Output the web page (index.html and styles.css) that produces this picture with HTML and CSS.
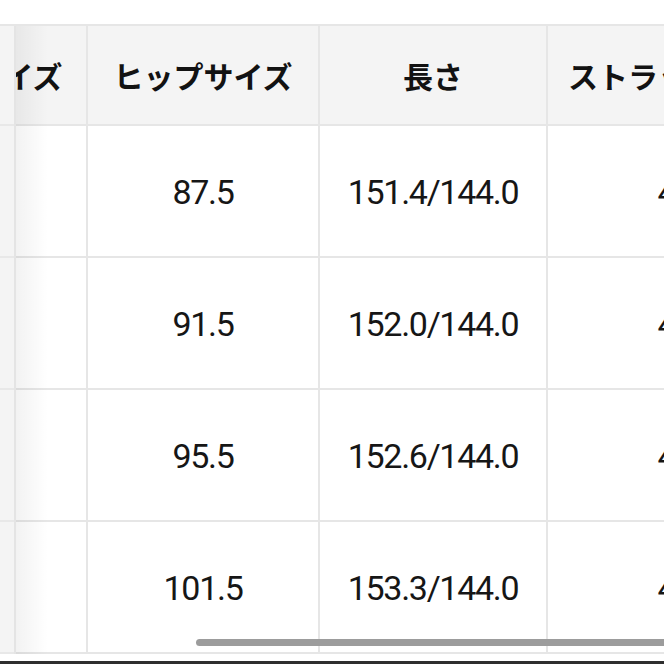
FILE: index.html
```html
<!DOCTYPE html>
<html lang="ja">
<head>
<meta charset="utf-8">
<title>サイズ表</title>
<link rel="stylesheet" href="styles.css">
</head>
<body>
<div class="screen">
  <div class="table">
    <div class="fixed-col">
      <div class="fcell head"></div>
      <div class="fcell"></div>
      <div class="fcell"></div>
      <div class="fcell"></div>
      <div class="fcell"></div>
    </div>
    <div class="scroller">
      <div class="grid">
        <div class="row head">
          <div class="cell">サイズ</div>
          <div class="cell">ヒップサイズ</div>
          <div class="cell">長さ</div>
          <div class="cell">ストラップの長さ</div>
        </div>
        <div class="row">
          <div class="cell"></div>
          <div class="cell">87.5</div>
          <div class="cell">151.4/144.0</div>
          <div class="cell">42.0</div>
        </div>
        <div class="row">
          <div class="cell"></div>
          <div class="cell">91.5</div>
          <div class="cell">152.0/144.0</div>
          <div class="cell">42.5</div>
        </div>
        <div class="row">
          <div class="cell"></div>
          <div class="cell">95.5</div>
          <div class="cell">152.6/144.0</div>
          <div class="cell">43.0</div>
        </div>
        <div class="row">
          <div class="cell"></div>
          <div class="cell">101.5</div>
          <div class="cell">153.3/144.0</div>
          <div class="cell">43.5</div>
        </div>
      </div>
      <div class="shadow"></div>
    </div>
    <div class="scrollbar"></div>
  </div>
  <div class="home-bar"></div>
</div>
</body>
</html>
```

FILE: styles.css
```css
* { box-sizing: border-box; }

html, body {
  margin: 0;
  padding: 0;
  background: #ffffff;
}

body {
  width: 664px;
  height: 664px;
  overflow: hidden;
  font-family: Roboto, "Noto Sans CJK JP", sans-serif;
  color: #161616;
}

.screen {
  padding-top: 24px;
  display: flex;
  flex-direction: column;
}

.table {
  position: relative;
  display: flex;
  height: 630px;
  border-top: 2px solid #e6e6e6;
}

.fixed-col {
  width: 16px;
  flex: none;
  background: #f4f4f4;
  border-right: 2px solid #e4e4e4;
}

.fcell {
  height: 132px;
  border-bottom: 2px solid #e8e8e8;
}

.fcell.head {
  height: 100px;
}

.scroller {
  position: relative;
  flex: 1;
  overflow: hidden;
}

.grid {
  margin-left: -66px;
  width: 880px;
}

.row {
  display: grid;
  grid-template-columns: 138px 232px 228px 282px;
  height: 132px;
  border-bottom: 2px solid #e6e6e6;
}

.row.head {
  height: 100px;
  background: #f4f4f4;
}

.cell {
  display: flex;
  align-items: center;
  justify-content: center;
  border-right: 2px solid #e6e6e6;
  white-space: nowrap;
  font-family: Roboto, sans-serif;
  font-size: 34px;
  letter-spacing: -1.3px;
  color: #161616;
  padding-top: 2px;
}

.row.head .cell {
  font-family: "Noto Sans CJK JP", sans-serif;
  font-weight: 700;
  font-size: 30px;
  letter-spacing: 0;
  color: #121212;
  padding-top: 0;
}

.shadow {
  position: absolute;
  left: 0;
  top: 0;
  bottom: 0;
  width: 32px;
  background: linear-gradient(to right, rgba(0, 0, 0, 0.05), rgba(0, 0, 0, 0));
}

.scrollbar {
  position: absolute;
  left: 196px;
  top: 613px;
  width: 500px;
  height: 7px;
  border-radius: 4px;
  background: #9c9c9c;
}

.home-bar {
  margin-top: 7px;
  height: 3px;
  background: #2e2e2e;
}
```
